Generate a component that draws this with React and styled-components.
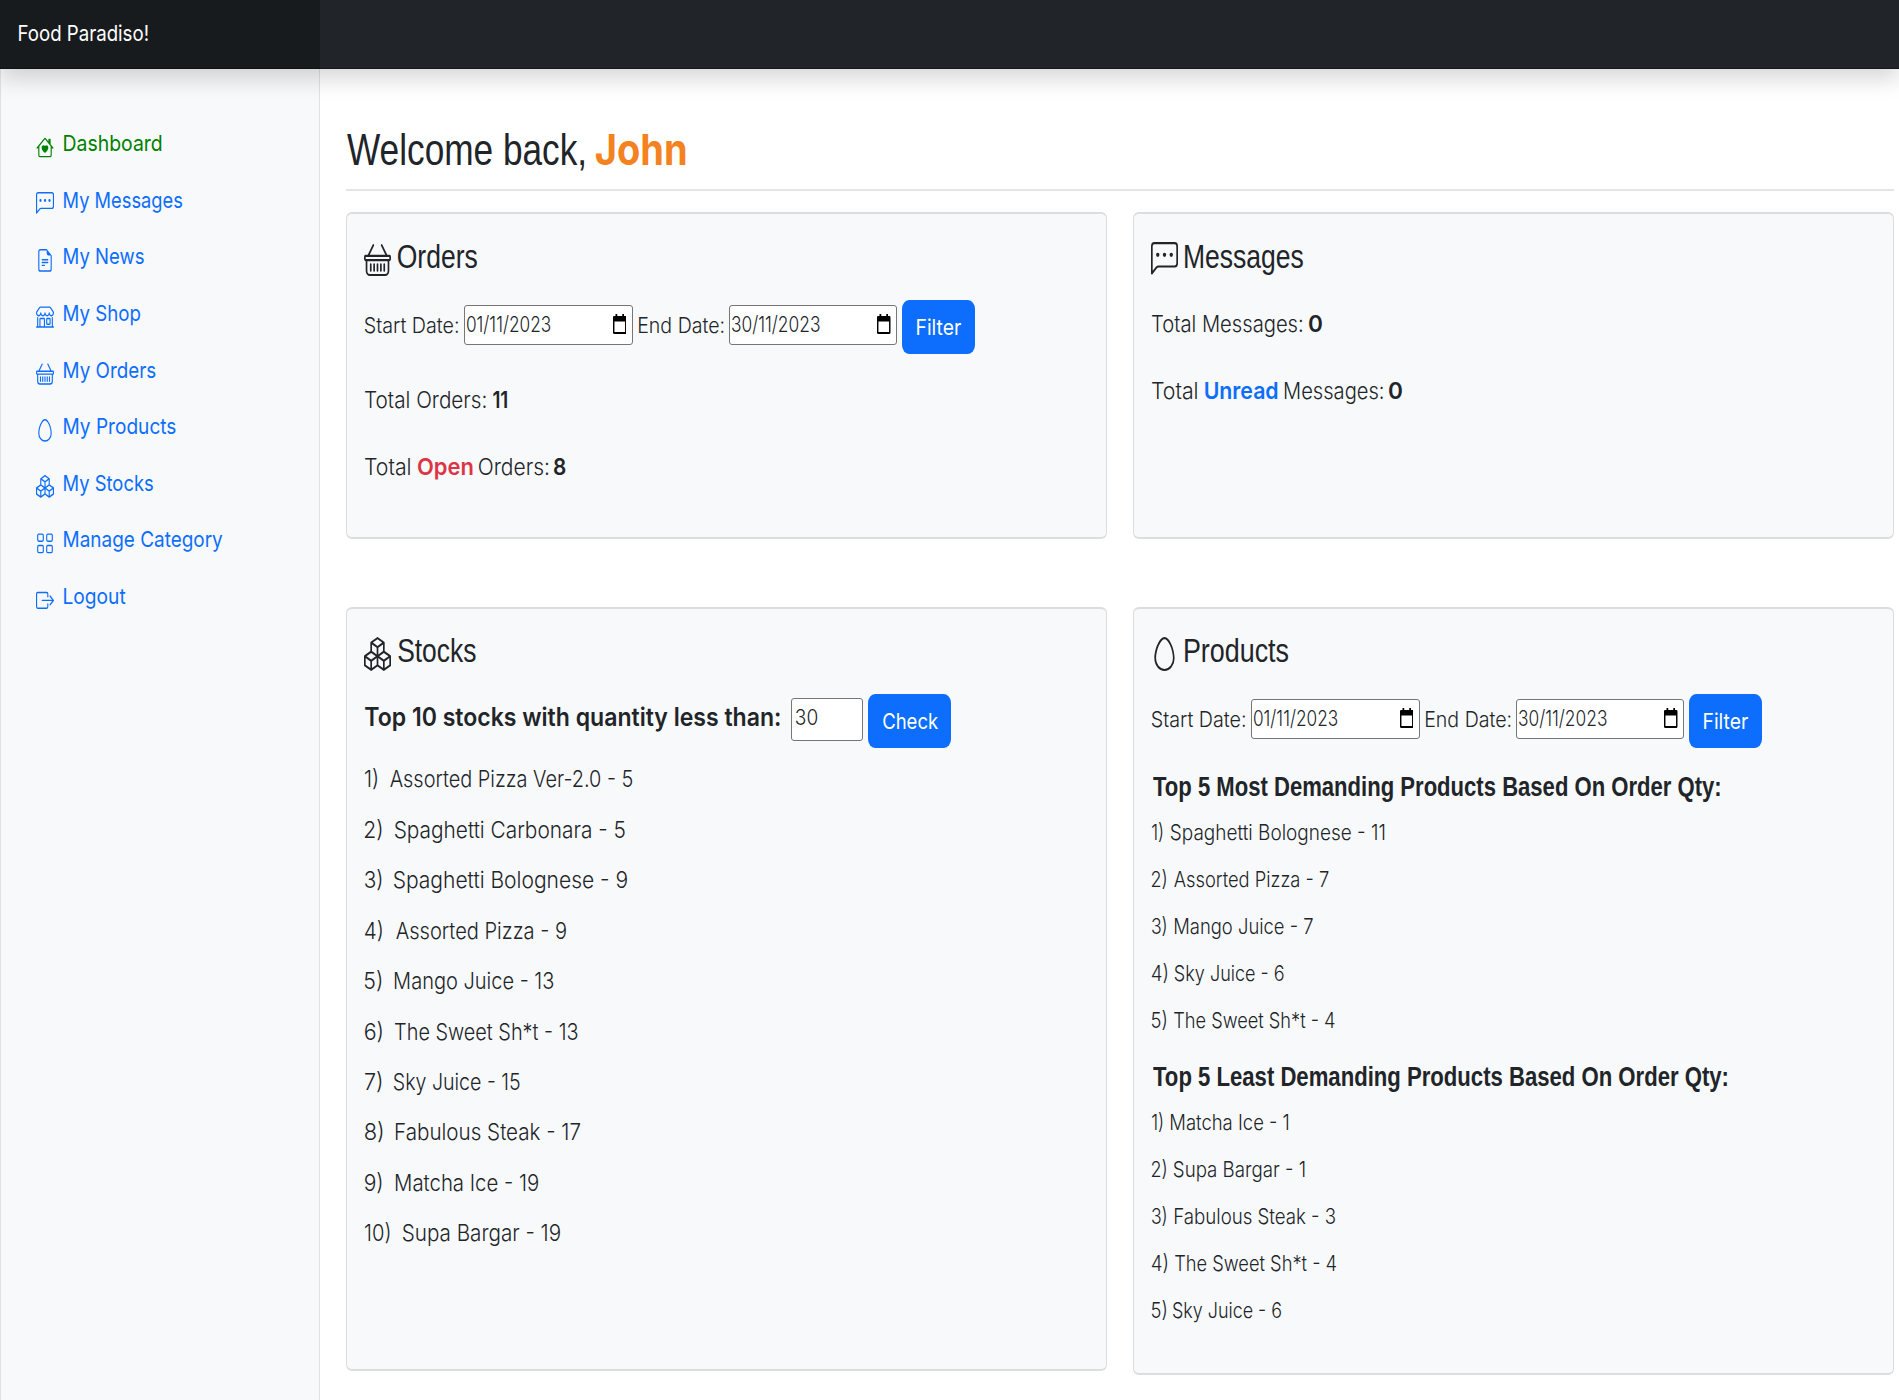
import React, { useLayoutEffect, useRef, useState } from "react";
import styled, { createGlobalStyle, css } from "styled-components";
import {
  BsHouseHeart, BsChatLeftDots, BsFileEarmarkText, BsShop, BsBasket,
  BsEgg, BsBoxes, BsGrid, BsBoxArrowRight,
} from "react-icons/bs";

const body = 'Inter, "Noto Sans", sans-serif';
const heading = '"Liberation Sans", Arial, sans-serif';

const Global = createGlobalStyle`
  *, *::before, *::after { box-sizing: border-box; }
  html, body { margin: 0; height: 100%; overflow: hidden; }
  body { background: #fff; color: #212529; font-family: ${body}; font-weight: 300; }
`;

const Run = styled.span`
  display: block;
  flex: none;
  white-space: nowrap;
  width: ${(p) => p.$w}px;
  margin-left: ${(p) => p.$gap || 0}px;
  ${(p) => p.$bold && css`font-weight: 600;`}
  ${(p) => p.$color && css`color: ${p.$color};`}
`;
const Glyphs = styled.span`
  display: inline-block;
  transform-origin: 0 50%;
`;

// Text set to an exact measure: the run is scaled so its ink spans w pixels.
function Fit({ w, gap, bold, color, children }) {
  const ref = useRef(null);
  const [t, setT] = useState("none");
  useLayoutEffect(() => {
    const s = getComputedStyle(ref.current);
    const ctx = document.createElement("canvas").getContext("2d");
    ctx.font = `${s.fontWeight} 400px ${s.fontFamily}`;
    const m = ctx.measureText(children);
    const unit = parseFloat(s.fontSize) / 400;
    const left = m.actualBoundingBoxLeft * unit;
    const ink = m.actualBoundingBoxRight * unit + left;
    const k = (w / ink) * ((m.width * unit) / ref.current.offsetWidth);
    setT(`translateX(${left * k}px) scaleX(${k})`);
  }, [w, children]);
  return (
    <Run $w={w} $gap={gap} $bold={bold} $color={color}>
      <Glyphs ref={ref} style={{ transform: t }}>{children}</Glyphs>
    </Run>
  );
}

const Page = styled.div`
  display: flex;
  flex-direction: column;
  height: 1400px;
  width: 1899px;
  overflow: hidden;
`;
const Header = styled.header`
  position: relative;
  z-index: 1;
  display: flex;
  flex: none;
  height: 68.5px;
  background: #212529;
  box-shadow: 0 11px 20px rgba(0, 0, 0, 0.15), inset 0 -1px 0 rgba(0, 0, 0, 0.35);
`;
const Brand = styled.div`
  display: flex;
  width: 320px;
  padding-left: 18.5px;
  background: rgba(0, 0, 0, 0.25);
  color: #fff;
  font-size: 22px;
  font-weight: 400;
  line-height: 67.5px;
`;
const Body = styled.div`
  display: flex;
  flex: 1;
  min-height: 0;
  margin-top: -0.5px;
`;
const Sidebar = styled.nav`
  flex: none;
  width: 320px;
  padding: 50px 0 0 35px;
  background: #f8f9fa;
  border-left: 1px solid #dee2e6;
  border-right: 1px solid #dee2e6;
`;
const NavItem = styled.a`
  display: flex;
  height: 56.65px;
  color: ${(p) => (p.$active ? "#008000" : "#0d6efd")};
  font-size: 22px;
  font-weight: 400;
  line-height: 50.3px;
  svg { flex: none; width: 18px; height: 22.8px; margin: 17.5px 10.2px 0 0; }
`;
const Main = styled.main`
  flex: 1;
  padding: 46px 5px 0 26px;
`;
const Welcome = styled.h1`
  display: flex;
  align-items: baseline;
  width: 1547.5px;
  height: 77px;
  margin: 0 0 21px;
  padding-left: 1.3px;
  border-bottom: 2px solid #e3e5e8;
  font: 400 44.3px/70px ${heading};
`;
const UserName = styled.span`
  display: flex;
  margin-left: 11.5px;
  color: #f58220;
  font: 700 43px/70px ${body};
`;
const Grid = styled.div`
  display: grid;
  grid-template-columns: 760.5px 760.5px;
  grid-template-rows: 327px auto;
  align-items: start;
  align-content: start;
  column-gap: 26.5px;
  row-gap: 68px;
`;
const Card = styled.section`
  height: ${(p) => p.$h}px;
  padding: 28px 0 0 18px;
  background: #f8f9fa;
  border: solid #dcdddf;
  border-width: 2px 1px;
  border-radius: 6px;
`;
const CardTitle = styled.h2`
  display: flex;
  align-items: flex-start;
  height: 34px;
  margin: 0 0 ${(p) => p.$after}px;
  font: 400 34px/${(p) => p.$leading || 26}px ${heading};
  svg { flex: none; width: 27px; height: 34px; margin: 0 6.8px 0 -0.7px; }
`;
const FilterRow = styled.div`
  display: flex;
  align-items: flex-start;
  height: 54.7px;
  padding-left: 0.4px;
  font-size: 22px;
  line-height: 50px;
`;
const Threshold = styled.strong`
  display: flex;
  margin-left: -0.7px;
  font-size: 25.6px;
  font-weight: 600;
  line-height: 46px;
`;
const Field = styled.div`
  display: flex;
  flex: none;
  width: ${(p) => p.$w}px;
  height: ${(p) => p.$h || 40}px;
  margin: ${(p) => p.$top || 5}px 0 0 ${(p) => p.$gap}px;
  padding-left: ${(p) => p.$pad || 2.7}px;
  background: #fff;
  border: solid #767676;
  border-width: 1.5px 1px;
  border-radius: 3px;
  line-height: 37px;
  svg { width: 13.5px; height: 20px; margin: 8px 5.5px 0 auto; }
`;
const Button = styled.button`
  display: flex;
  justify-content: center;
  flex: none;
  width: ${(p) => p.$w}px;
  height: 54.3px;
  margin: 0 0 0 ${(p) => p.$gap}px;
  padding: 0 0 0 1.2px;
  border: 0;
  border-radius: 7px / 9px;
  background: #0d6efd;
  color: #fff;
  font: 400 22px/54px ${body};
`;
const Totals = styled.div`
  padding: ${(p) => p.$top}px 0 0;
  font-size: 23.3px;
  line-height: 67.4px;
`;
const Line = styled.div`
  display: flex;
`;
const StockList = styled.div`
  padding-top: 5.8px;
  font-size: 23.3px;
  line-height: 50.4px;
`;
const ProductList = styled.div`
  font-size: 22px;
  line-height: 47px;
`;
const ListHeading = styled.h3`
  display: flex;
  height: 55px;
  margin: 0;
  padding: 12.6px 0 0 1.2px;
  font: 700 27.5px/42.4px ${heading};
`;
const Products = styled.div`
  padding-top: 5px;
`;

const CalendarIcon = () => (
  <svg viewBox="0 0 14 20" preserveAspectRatio="none">
    <path d="M2.6 0h1.8v2h5.2V0h1.8v2H13q1 0 1 1.4v15.2q0 1.4-1 1.4H1q-1 0-1-1.4V3.4Q0 2 1 2h1.6zM1.5 7.5v10.5h11V7.5z" fill="#000" fillRule="evenodd" />
  </svg>
);

const nav = [
  [BsHouseHeart, "Dashboard", 97],
  [BsChatLeftDots, "My Messages", 118.2],
  [BsFileEarmarkText, "My News", 79.5],
  [BsShop, "My Shop", 75.8],
  [BsBasket, "My Orders", 91],
  [BsEgg, "My Products", 111.3],
  [BsBoxes, "My Stocks", 88.8],
  [BsGrid, "Manage Category", 158.5],
  [BsBoxArrowRight, "Logout", 61.8],
];

const stocks = [
  ["1)", 12, 13.2, "Assorted Pizza Ver-2.0 - 5", 242],
  ["2)", 16.3, 13.4, "Spaghetti Carbonara - 5", 229.8],
  ["3)", 16.3, 13, "Spaghetti Bolognese - 9", 233],
  ["4)", 17, 14, "Assorted Pizza - 9", 170],
  ["5)", 16.3, 13.7, "Mango Juice - 13", 158.4],
  ["6)", 16.8, 13.2, "The Sweet Sh*t - 13", 182],
  ["7)", 16.3, 13, "Sky Juice - 15", 125.3],
  ["8)", 17.2, 14, "Fabulous Steak - 17", 183.7],
  ["9)", 16.5, 14, "Matcha Ice - 19", 142],
  ["10)", 24.7, 13.2, "Supa Bargar - 19", 157],
];
const most = [
  ["1)", 10.2, 8.4, "Spaghetti Bolognese - 11", 213.8],
  ["2)", 14, 7.8, "Assorted Pizza - 7", 154.5],
  ["3)", 14, 8.5, "Mango Juice - 7", 138],
  ["4)", 15.6, 7.5, "Sky Juice - 6", 108.6],
  ["5)", 14.3, 7.8, "The Sweet Sh*t - 4", 160.5],
];
const least = [
  ["1)", 10.2, 9, "Matcha Ice - 1", 117.7],
  ["2)", 14, 8.1, "Supa Bargar - 1", 130.7],
  ["3)", 14, 8.5, "Fabulous Steak - 3", 160],
  ["4)", 15.6, 7.9, "The Sweet Sh*t - 4", 161],
  ["5)", 14.3, 7.2, "Sky Juice - 6", 108],
];

const Rows = ({ items }) =>
  items.map(([n, nw, gap, text, w]) => (
    <Line key={n}>
      <Fit w={nw}>{n}</Fit>
      <Fit w={w} gap={gap}>{text}</Fit>
    </Line>
  ));

const DateFilter = () => (
  <FilterRow>
    <Fit w={93}>Start Date:</Fit>
    <Field $w={169} $gap={5.3}><Fit w={83.3}>01/11/2023</Fit><CalendarIcon /></Field>
    <Fit w={84.8} gap={6.5}>End Date:</Fit>
    <Field $w={168.7} $gap={4.8}><Fit w={87}>30/11/2023</Fit><CalendarIcon /></Field>
    <Button $w={73.5} $gap={4.5}><Fit w={43.8}>Filter</Fit></Button>
  </FilterRow>
);

const stretch = { preserveAspectRatio: "none" };

export default function App() {
  return (
    <Page>
      <Global />
      <Header>
        <Brand><Fit w={128.6}>Food Paradiso!</Fit></Brand>
      </Header>
      <Body>
        <Sidebar>
          {nav.map(([Icon, label, w], i) => (
            <NavItem key={label} $active={i === 0}>
              <Icon {...stretch} />
              <Fit w={w}>{label}</Fit>
            </NavItem>
          ))}
        </Sidebar>
        <Main>
          <Welcome>
            <Fit w={237.5}>Welcome back,</Fit>
            <UserName><Fit w={89.3}>John</Fit></UserName>
          </Welcome>
          <Grid>
            <Card $h={327}>
              <CardTitle $after={24} $leading={28}><BsBasket {...stretch} /><Fit w={79}>Orders</Fit></CardTitle>
              <DateFilter />
              <Totals $top={11.2}>
                <Line><Fit w={120.8}>Total Orders:</Fit><Fit w={14.3} gap={7} bold>11</Fit></Line>
                <Line>
                  <Fit w={44.8}>Total</Fit>
                  <Fit w={54} gap={7.8} bold color="#dc3545">Open</Fit>
                  <Fit w={69.2} gap={7.5}>Orders:</Fit>
                  <Fit w={11.4} gap={6.2} bold>8</Fit>
                </Line>
              </Totals>
            </Card>
            <Card $h={327}>
              <CardTitle $after={13.2} $leading={28}><BsChatLeftDots {...stretch} /><Fit w={118}>Messages</Fit></CardTitle>
              <Totals $top={0.4}>
                <Line><Fit w={150}>Total Messages:</Fit><Fit w={12.4} gap={6.8} bold>0</Fit></Line>
                <Line>
                  <Fit w={44.8}>Total</Fit>
                  <Fit w={72.3} gap={8} bold color="#0d6efd">Unread</Fit>
                  <Fit w={97.5} gap={7.5}>Messages:</Fit>
                  <Fit w={12.4} gap={6.8} bold>0</Fit>
                </Line>
              </Totals>
            </Card>
            <Card $h={764}>
              <CardTitle $after={23}><BsBoxes {...stretch} /><Fit w={77.5}>Stocks</Fit></CardTitle>
              <FilterRow>
                <Threshold><Fit w={414.5}>Top 10 stocks with quantity less than:</Fit></Threshold>
                <Field $w={72} $h={42.7} $top={4} $gap={12} $pad={3.5}><Fit w={21.2}>30</Fit></Field>
                <Button $w={83} $gap={5}><Fit w={55.5}>Check</Fit></Button>
              </FilterRow>
              <StockList><Rows items={stocks} /></StockList>
            </Card>
            <Card $h={768}>
              <CardTitle $after={23}><BsEgg {...stretch} /><Fit w={103}>Products</Fit></CardTitle>
              <DateFilter />
              <Products>
                <ListHeading><Fit w={566.5}>Top 5 Most Demanding Products Based On Order Qty:</Fit></ListHeading>
                <ProductList><Rows items={most} /></ProductList>
                <ListHeading><Fit w={574}>Top 5 Least Demanding Products Based On Order Qty:</Fit></ListHeading>
                <ProductList><Rows items={least} /></ProductList>
              </Products>
            </Card>
          </Grid>
        </Main>
      </Body>
    </Page>
  );
}
